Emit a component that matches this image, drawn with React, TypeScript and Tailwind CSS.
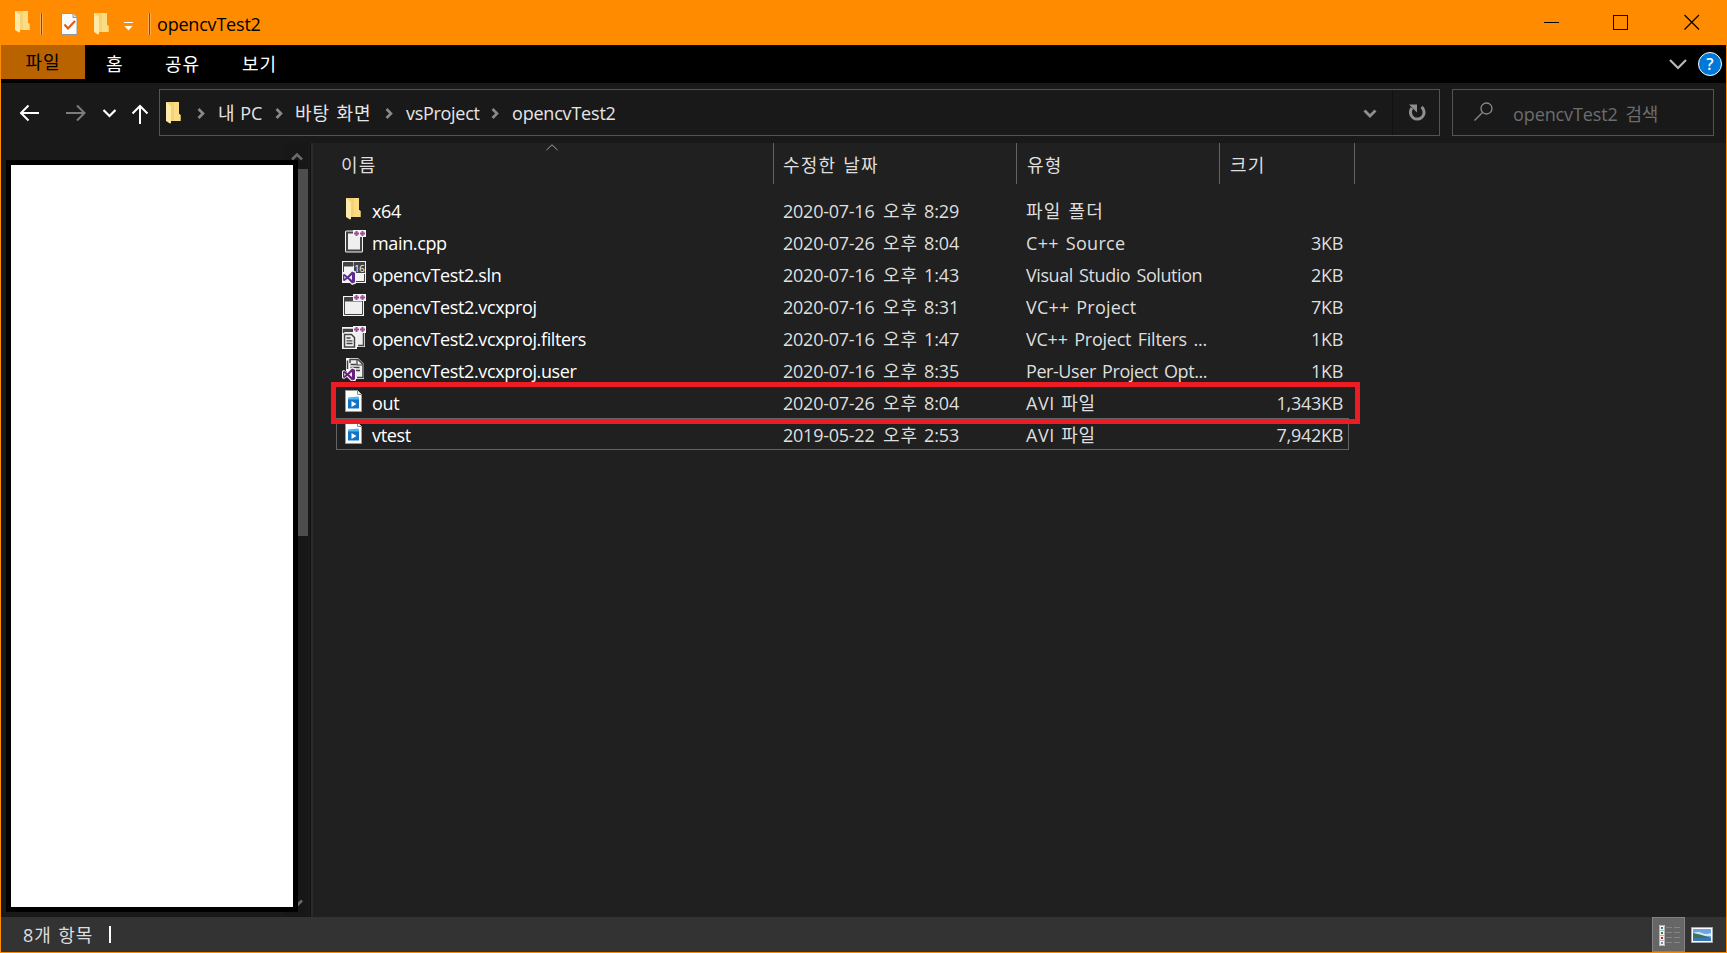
import type { ReactNode } from 'react'

type FileKind = 'folder' | 'cpp' | 'sln' | 'vcxproj' | 'filters' | 'user' | 'video'

interface FileItem {
  name: string
  date: string
  type: string
  typeClass: string
  size: string
  kind: FileKind
}

const KOREAN = 'tracking-[1.2px] [word-spacing:1px]'

const FILES: FileItem[] = [
  { name: 'x64', date: '2020-07-16 오후 8:29', type: '파일 폴더', typeClass: KOREAN, size: '', kind: 'folder' },
  { name: 'main.cpp', date: '2020-07-26 오후 8:04', type: 'C++ Source', typeClass: 'tracking-[0.3px] [word-spacing:2px]', size: '3KB', kind: 'cpp' },
  { name: 'opencvTest2.sln', date: '2020-07-16 오후 1:43', type: 'Visual Studio Solution', typeClass: 'tracking-[-0.43px] [word-spacing:2px]', size: '2KB', kind: 'sln' },
  { name: 'opencvTest2.vcxproj', date: '2020-07-16 오후 8:31', type: 'VC++ Project', typeClass: 'tracking-[0.2px] [word-spacing:2px]', size: '7KB', kind: 'vcxproj' },
  { name: 'opencvTest2.vcxproj.filters', date: '2020-07-16 오후 1:47', type: 'VC++ Project Filters ...', typeClass: 'tracking-[-0.23px] [word-spacing:2px]', size: '1KB', kind: 'filters' },
  { name: 'opencvTest2.vcxproj.user', date: '2020-07-16 오후 8:35', type: 'Per-User Project Opt...', typeClass: 'tracking-[-0.43px] [word-spacing:2px]', size: '1KB', kind: 'user' },
  { name: 'out', date: '2020-07-26 오후 8:04', type: 'AVI 파일', typeClass: 'tracking-[0.6px] [word-spacing:1px]', size: '1,343KB', kind: 'video' },
  { name: 'vtest', date: '2019-05-22 오후 2:53', type: 'AVI 파일', typeClass: 'tracking-[0.6px] [word-spacing:1px]', size: '7,942KB', kind: 'video' },
]

const FolderIcon = () => (
  <svg width="15" height="22" viewBox="0 0 15 22" className="shrink-0">
    <path d="M0 0h13v12l1.500 1v6H4z" fill="#f5d273" />
    <path d="M8 0h5v12l1.500 1v6H8z" fill="#fbdc82" />
    <path d="M0 0l5 4v17l-1 .5L0 19z" fill="#ffe9a6" />
  </svg>
)

const PlusPlus = () => (
  <g>
    <path d="M11 1h13v7H11z" fill="#f4f4f4" />
    <path d="M12 4.500h5M14.500 2v5M18 4.500h5M20.500 2v5" stroke="#9b4f96" strokeWidth="2" />
  </g>
)

const VsMark = ({ y, fill }: { y: number; fill: string }) => (
  <g transform={`translate(0 ${y})`}>
    <path d="M0 3l2-1 3 2.500L10 -1l4 1.500v12l-4 1.500-5-5L2 11 0 10z" fill="#f4f4f4" />
    <path d="M1 3.500l1.500-.5 3 2.300L10 .5l3 1.200v9.600l-3 1.200-4.500-4.800-3 2.300L1 9.500zM2.300 5v3l1.600-1.500zM10 4L7 6.500 10 9z" fill={fill} fillRule="evenodd" />
  </g>
)

const FileIcon = ({ kind }: { kind: FileKind }) => {
  switch (kind) {
    case 'folder':
      return (
        <span className="ml-1 flex">
          <FolderIcon />
        </span>
      )
    case 'cpp':
      return (
        <svg width="24" height="24" viewBox="0 0 24 24">
          <rect x="3" y="1.500" width="18" height="22" rx="1.500" fill="#f4f4f4" />
          <path d="M5 3.500h14v18H5z" fill="#efeff2" stroke="#424242" strokeWidth="2" />
          <PlusPlus />
        </svg>
      )
    case 'sln':
      return (
        <svg width="24" height="24" viewBox="0 0 24 24">
          <path d="M0 0h24v22H0z" fill="#f4f4f4" />
          <path d="M1.500 11V1.500h9.500V5M22.500 13v7.500H14" fill="none" stroke="#424242" />
          <path d="M2 2h9v3.500H2zM12 1h11v11H12z" fill="#424242" />
          <text x="12.200" y="10.500" fontSize="9.500" textLength="10.500" fill="#fff" fontFamily="Open Sans">16</text>
          <VsMark y={10} fill="#5c2d91" />
        </svg>
      )
    case 'vcxproj':
      return (
        <svg width="24" height="24" viewBox="0 0 24 24">
          <path d="M1 3h21v20H1z" fill="#f4f4f4" />
          <path d="M2.500 4.500h18v17h-18z" fill="#efeff2" stroke="#424242" />
          <path d="M2.500 4.500h18V8.500h-18z" fill="#424242" />
          <PlusPlus />
        </svg>
      )
    case 'filters':
      return (
        <svg width="24" height="24" viewBox="0 0 24 24">
          <path d="M0 2h23v20H14v2H0z" fill="#f4f4f4" />
          <path d="M1.500 9V4.500h20v16H16" fill="#efeff2" stroke="#424242" strokeWidth="1.500" />
          <path d="M1 4h20v3H1z" fill="#424242" />
          <path d="M0 8h12l3 3v13H0z" fill="#f4f4f4" />
          <path d="M2.500 9.500h7l3 3V22h-10z" fill="#efeff2" stroke="#424242" strokeWidth="1.500" />
          <path d="M4.500 13h4M4.500 15.800h6M4.500 18.500h6" stroke="#424242" strokeWidth="1.300" />
          <PlusPlus />
        </svg>
      )
    case 'user':
      return (
        <svg width="24" height="24" viewBox="0 0 24 24">
          <path d="M4 1h12l6 6v15H13l-9-8z" fill="#f4f4f4" />
          <path d="M5.500 12V3.500M8 6V2.500h8l5 5v13h-6" fill="#efeff2" stroke="#424242" strokeWidth="1.500" />
          <path d="M8.500 7.500h6M8.500 10.500h9M12 13.500h6" stroke="#424242" strokeWidth="1.300" />
          <path d="M15 2v6h6" fill="none" stroke="#424242" strokeWidth="1.200" />
          <VsMark y={11} fill="#68217a" />
        </svg>
      )
    default:
      return (
        <svg width="24" height="24" viewBox="0 0 24 24">
          <path d="M3.500 1.500h12l4 4v17h-16z" fill="#fff" stroke="#9a9a9a" />
          <path d="M15.500 1.500v4h4" fill="#ececec" stroke="#8a8a8a" />
          <path d="M6 8.500l10-1 1 1v3H6z" fill="#4bb8f0" />
          <path d="M6 10.500h11v9H6z" fill="#1273c4" />
          <path d="M9.500 12v6l5-3z" fill="#fff" />
        </svg>
      )
  }
}

const CrumbArrow = () => (
  <svg width="8" height="11" viewBox="0 0 8 11" className="mt-[1px] shrink-0">
    <path d="M1.500 1l4.500 4.500L1.500 10" fill="none" stroke="#8a8a8a" strokeWidth="2.600" />
  </svg>
)

const TitleDivider = () => (
  <div className="h-[22px] w-[3px] border-x border-[#ffae4b] bg-[#8a4c00]" />
)

const TitleBar = () => (
  <div className="flex h-[45px] shrink-0 items-center bg-[#ff8c00] pl-[14px]">
    <span className="-mt-[2px]">
      <FolderIcon />
    </span>
    <span className="mt-[2px] ml-[10px]">
      <TitleDivider />
    </span>
    <svg width="17" height="22" viewBox="0 0 17 22" className="mt-[3px] ml-[18px]">
      <path d="M.5.500h11.500l4 4v17H.5z" fill="#fbfbfb" stroke="#8d98a5" />
      <path d="M12 .5v4h4" fill="#ddd" stroke="#8d98a5" />
      <path d="M3.500 11.500l3.500 4 7-7.500" fill="none" stroke="#e4570f" strokeWidth="2" />
    </svg>
    <span className="mt-[2px] ml-4">
      <FolderIcon />
    </span>
    <svg width="9" height="9" viewBox="0 0 9 9" className="mt-[7px] ml-[15px]">
      <path d="M0 .5h9" stroke="#fff" />
      <path d="M.5 4h8l-4 4.500z" fill="#fff" />
    </svg>
    <span className="mt-[2px] ml-[15px]">
      <TitleDivider />
    </span>
    <span className="mt-[2px] ml-[6px] text-[18px] tracking-[-0.2px] text-black">opencvTest2</span>
    <svg width="156" height="17" viewBox="0 0 156 17" className="mr-[26px] ml-auto" shapeRendering="crispEdges">
      <path d="M0 8.500h15M69.500 1.500h14v14h-14z" fill="none" stroke="#000" />
      <path d="M140.500 1l14.500 14.500M155 1L140.500 15.500" stroke="#000" shapeRendering="auto" strokeWidth="1.200" />
    </svg>
  </div>
)

const RibbonTabs = () => (
  <div className="flex h-[38px] shrink-0 items-start bg-black text-[18px] tracking-[1px] text-white">
    <div className="flex h-[34px] w-[84px] items-center justify-center bg-[#b86200] text-black">파일</div>
    <span className="mt-[7px] ml-[21px] w-[59px]">홈</span>
    <span className="mt-[7px] w-[77px]">공유</span>
    <span className="mt-[7px]">보기</span>
    <svg width="18" height="11" viewBox="0 0 18 11" className="mt-[14px] ml-auto">
      <path d="M1 1l8 8 8-8" fill="none" stroke="#b8b8b8" strokeWidth="2.200" />
    </svg>
    <div className="mt-[7px] mr-[4px] ml-[11px] flex size-6 items-center justify-center rounded-full border border-white bg-[#0078d7] text-[16px] font-semibold tracking-normal">
      ?
    </div>
  </div>
)

const NavBar = () => (
  <div className="flex h-[60px] shrink-0 items-start bg-[#191919] pt-[6px] text-[18px] text-[#e6e6e6]">
    <svg width="130" height="47" viewBox="0 0 130 47" className="mr-[9px] ml-[18px]" fill="none" strokeWidth="2">
      <path d="M20 24H2M9.500 16.500L2 24l7.500 7.500" stroke="#fff" />
      <path d="M47 24h18M58 16.500l7.500 7.500-7.500 7.500" stroke="#7d7d7d" />
      <path d="M84.500 21l6 6 6-6" stroke="#fff" strokeWidth="2.200" />
      <path d="M121 35V17M113.500 24.500L121 17l7.500 7.500" stroke="#fff" />
    </svg>
    <div className="ml-[1px] flex h-[47px] w-[1281px] items-center border border-[#535353]">
      <span className="ml-[6px]">
        <FolderIcon />
      </span>
      <span className="ml-[16px]">
        <CrumbArrow />
      </span>
      <span className="ml-[13px] w-[46px] whitespace-nowrap [word-spacing:1px]">내 PC</span>
      <span className="ml-[11px]">
        <CrumbArrow />
      </span>
      <span className="ml-[12px] w-[80px] tracking-[0.9px] whitespace-nowrap [word-spacing:1px]">바탕 화면</span>
      <span className="ml-[10px]">
        <CrumbArrow />
      </span>
      <span className="ml-[13px] w-[75px] tracking-[-0.3px]">vsProject</span>
      <span className="ml-[10px]">
        <CrumbArrow />
      </span>
      <span className="ml-[13px] tracking-[-0.2px]">opencvTest2</span>
      <svg width="14" height="10" viewBox="0 0 14 10" className="mt-[2px] ml-auto">
        <path d="M1.500 1.500L7 7l5.500-5.500" fill="none" stroke="#8f8f8f" strokeWidth="2.800" />
      </svg>
      <div className="ml-[15px] flex h-full w-[47px] items-center justify-center border-l border-[#111]">
        <svg width="17" height="17" viewBox="0 0 17 17" className="ml-[2px]">
          <path d="M12.500 3A6.800 6.800 0 1 1 3 4" fill="none" stroke="#8f8f8f" strokeWidth="3" />
          <path d="M0 .5h8v8z" fill="#8f8f8f" />
        </svg>
      </div>
    </div>
    <div className="ml-3 flex h-[47px] w-[262px] items-center border border-[#535353] text-[#6d6d6d]">
      <svg width="19" height="19" viewBox="0 0 19 19" className="-mt-[2px] ml-[21px]">
        <circle cx="12.500" cy="6.500" r="5.500" fill="none" stroke="#8a8a8a" strokeWidth="1.300" />
        <path d="M8.500 10.500L.5 18.500" stroke="#8a8a8a" strokeWidth="1.300" />
      </svg>
      <span className="mt-[3px] ml-[20px] tracking-[-0.1px] [word-spacing:3px]">opencvTest2 검색</span>
    </div>
  </div>
)

const Sidebar = () => (
  <div className="flex w-[309px] shrink-0 bg-[#191919]">
    <div className="z-10 mt-[17px] mb-[5px] ml-[5px] w-[292px] border-[5px] border-black bg-white" />
    {/* the scrollbar is partly hidden under the white panel */}
    <div className="-ml-[14px] flex w-6 flex-col items-center bg-[#171717]">
      <svg width="12" height="9" viewBox="0 0 12 9" className="mt-[9px] ml-[2px]">
        <path d="M1 7.500L6 2.500l5 5" fill="none" stroke="#6a6a6a" strokeWidth="2.600" />
      </svg>
      <div className="mt-2 ml-[2px] h-[367px] w-[22px] bg-[#4d4d4d]" />
      <svg width="12" height="9" viewBox="0 0 12 9" className="mt-auto mb-[9px] ml-[2px]">
        <path d="M1 1.500l5 5 5-5" fill="none" stroke="#6a6a6a" strokeWidth="2.600" />
      </svg>
    </div>
  </div>
)

const HeaderCell = ({ className, children }: { className: string; children: ReactNode }) => (
  <div className={`flex h-[41px] items-center border-r border-[#636363] pt-[2px] ${KOREAN} ${className}`}>
    {children}
  </div>
)

const DateCell = ({ value }: { value: string }) => {
  const [day, half, time] = value.split(' ')
  return (
    <span className="mt-[1px] flex w-[243px]">
      <span className="w-[100px] tracking-[-0.25px]">{day}</span>
      <span className="w-[41px] tracking-[1px]">{half}</span>
      <span className="tracking-[-0.1px]">{time}</span>
    </span>
  )
}

const FileList = () => (
  <div className="relative flex-1 bg-[#202020] text-[18px] text-[#dedede]">
    <svg width="12" height="7" viewBox="0 0 12 7" className="absolute top-[1px] left-[233px]">
      <path d="M.5 6L6 .8 11.500 6" fill="none" stroke="#a0a0a0" />
    </svg>
    <div className="flex">
      <HeaderCell className="w-[461px] pl-[28px]">이름</HeaderCell>
      <HeaderCell className="w-[243px] pl-[9px]">수정한 날짜</HeaderCell>
      <HeaderCell className="w-[203px] pl-[10px]">유형</HeaderCell>
      <HeaderCell className="w-[135px] pl-[10px]">크기</HeaderCell>
    </div>
    <div className="mt-[10px] ml-[23px] w-[1013px]">
      {FILES.map((file, i) => (
        <div
          key={file.name}
          className={`flex h-8 items-center ${i === FILES.length - 1 ? 'outline-1 -outline-offset-1 outline-[#636363]' : ''}`}
        >
          <div className="mb-[3px] ml-[6px] flex w-6 items-center">
            <FileIcon kind={file.kind} />
          </div>
          <span className="mt-[1px] ml-[6px] w-[411px] tracking-[-0.36px] text-white">{file.name}</span>
          <DateCell value={file.date} />
          <span className={`mt-[1px] w-[203px] whitespace-nowrap ${file.typeClass}`}>{file.type}</span>
          <span className="mt-[1px] w-[114px] text-right tracking-[-0.3px]">{file.size}</span>
        </div>
      ))}
    </div>
    {/* highlight around the output video */}
    <div className="absolute top-[239px] left-[18px] h-[42px] w-[1029px] border-[5px] border-[#ed1c24]" />
  </div>
)

const StatusBar = () => (
  <div className="flex h-[35px] shrink-0 items-center bg-[#333] pl-[22px] text-[18px] text-[#dedede]">
    <span className="w-[70px] pt-[1px] tracking-[0.9px] whitespace-nowrap [word-spacing:1px]">8개 항목</span>
    <div className="ml-[16px] h-[17px] w-[2px] bg-white" />
    <div className="mr-[6px] ml-auto flex h-[35px] w-[33px] items-center justify-center border border-[#838383] bg-[#666]">
      <svg width="22" height="21" viewBox="0 0 22 21" className="mt-[2px] ml-[2px]">
        <path d="M0 0h6v21H0z" fill="#f2f2f2" />
        <path d="M.5.500h5v20h-5zM0 5.500h6M0 10.500h6M0 15.500h6" fill="none" stroke="#b5b5b5" />
        <path d="M2 2h2v2H2z" fill="#2f7d8c" />
        <path d="M2 7h2v2H2z" fill="#4c7a34" />
        <path d="M2 12h2v2H2z" fill="#c0260c" />
        <path d="M2 17h2v2H2z" fill="#6f8fa8" />
        <path d="M7 2.500h6M15 2.500h6M7 7.500h6M15 7.500h6M7 12.500h6M15 12.500h6M7 17.500h6M15 17.500h6" stroke="#858585" />
      </svg>
    </div>
    <svg width="22" height="16" viewBox="0 0 22 16" className="mr-[13px]">
      <path d="M.5.500h21v15H.5z" fill="#fff" stroke="#aaa" />
      <path d="M2 2h18v12H2z" fill="#6aa5e8" />
      <path d="M2 6q5-2 9 0t9 0v3H2z" fill="#d7e7f0" />
      <path d="M2 6q7 1 18 5H2z" fill="#3d7358" />
      <path d="M2 11h18v3H2z" fill="#3a78b5" />
    </svg>
  </div>
)

export default function App() {
  return (
    <div className="flex h-[953px] w-[1727px] flex-col overflow-hidden border-x border-b border-[#ff8c00] bg-[#191919] font-['Open_Sans','Noto_Sans_CJK_KR',sans-serif] leading-6">
      <TitleBar />
      <RibbonTabs />
      <NavBar />
      <div className="flex min-h-0 flex-1">
        <Sidebar />
        <div className="w-[3px] shrink-0 border-l border-[#111] bg-[#2b2b2b]" />
        <FileList />
      </div>
      <StatusBar />
    </div>
  )
}
